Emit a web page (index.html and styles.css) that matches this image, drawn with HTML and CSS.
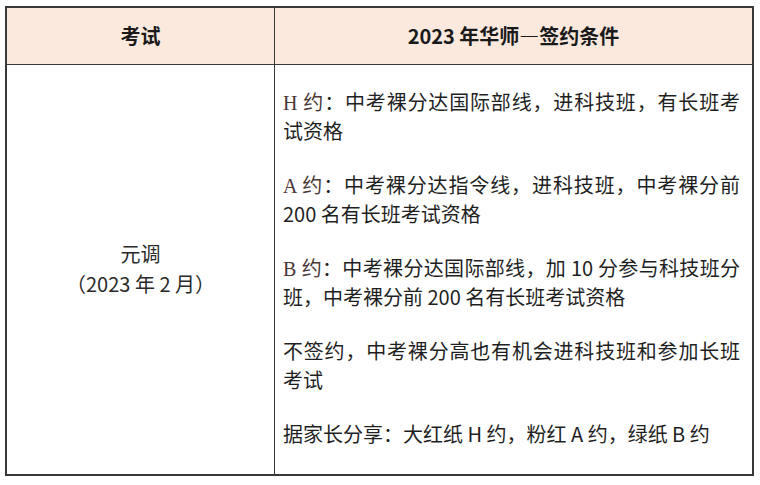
FILE: index.html
```html
<!DOCTYPE html>
<html lang="zh-CN">
<head>
<meta charset="utf-8">
<link rel="stylesheet" href="styles.css">
</head>
<body>
<table class="sheet">
  <thead>
    <tr class="head-row">
      <th class="col-exam">考试</th>
      <th class="col-cond">2023 年华师—签约条件</th>
    </tr>
  </thead>
  <tbody>
    <tr class="body-row">
      <td class="exam">元调<br>（2023 年 2 月）</td>
      <td class="cond">
        <div class="para">
          <div class="line full"><span class="tag">H 约</span>：中考裸分达国际部线，进科技班，有长班考</div>
          <div class="line">试资格</div>
        </div>
        <div class="para">
          <div class="line full"><span class="tag">A 约</span>：中考裸分达指令线，进科技班，中考裸分前</div>
          <div class="line">200 名有长班考试资格</div>
        </div>
        <div class="para">
          <div class="line full"><span class="tag">B 约</span>：中考裸分达国际部线，加 10 分参与科技班分</div>
          <div class="line">班，中考裸分前 200 名有长班考试资格</div>
        </div>
        <div class="para">
          <div class="line full">不签约，中考裸分高也有机会进科技班和参加长班</div>
          <div class="line">考试</div>
        </div>
        <div class="para">
          <div class="line">据家长分享：大红纸 H 约，粉红 A 约，绿纸 B 约</div>
        </div>
      </td>
    </tr>
  </tbody>
</table>
</body>
</html>
```

FILE: styles.css
```css
html, body {
  margin: 0;
  padding: 0;
  background: #ffffff;
}

body {
  font-family: "Noto Sans CJK SC", "Noto Sans", sans-serif;
  color: #1f1f1f;
}

.sheet {
  margin: 6px 0 0 5px;
  width: 749px;
  border-collapse: collapse;
  border: 2px solid #383838;
  table-layout: fixed;
}

.sheet th,
.sheet td {
  border: 1.5px solid #383838;
  padding: 0;
}

.head-row {
  height: 57px;
}

.body-row {
  height: 411px;
}

.sheet th {
  background: #fbe9de;
  font-size: 20px;
  font-weight: 700;
  color: #1a1a1a;
  text-align: center;
  vertical-align: middle;
}

.col-exam {
  width: 267px;
}

.exam {
  text-align: center;
  vertical-align: middle;
  font-size: 20px;
  line-height: 30px;
  color: #2a2a2a;
  padding-bottom: 2px;
}

.sheet .cond {
  vertical-align: top;
  font-size: 20px;
  line-height: 29px;
  padding: 22px 12px 0 8px;
  color: #1f1f1f;
}

.para {
  margin-bottom: 25px;
}

.para:last-child {
  margin-bottom: 0;
}

.line {
  height: 29px;
  white-space: nowrap;
}

.line.full {
  text-align: justify;
  text-align-last: justify;
}

.tag {
  font-family: "Liberation Serif", "Noto Sans CJK SC", serif;
  color: #4a3636;
}
```
